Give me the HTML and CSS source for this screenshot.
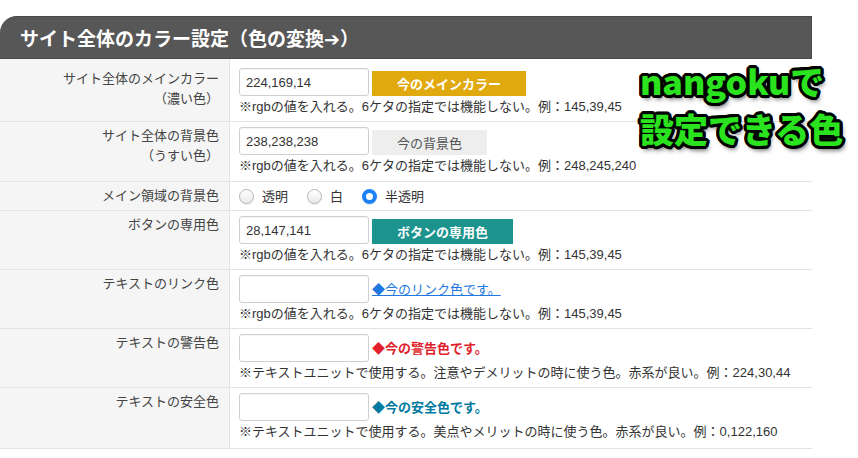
FILE: index.html
```html
<!DOCTYPE html>
<html lang="ja">
<head>
<meta charset="utf-8">
<title>サイト全体のカラー設定</title>
<link rel="stylesheet" href="styles.css">
</head>
<body>
<div class="panel">
  <h2 class="panel-title">サイト全体のカラー設定（色の変換➔）</h2>
  <div class="settings">
    <div class="row first">
      <div class="label">サイト全体のメインカラー<br>（濃い色）</div>
      <div class="field">
        <div class="line"><input class="rgb" type="text" value="224,169,14"><span class="swatch swatch-main">今のメインカラー</span></div>
        <p class="note">※rgbの値を入れる。6ケタの指定では機能しない。例：145,39,45</p>
      </div>
    </div>
    <div class="row">
      <div class="label">サイト全体の背景色<br>（うすい色）</div>
      <div class="field">
        <div class="line"><input class="rgb" type="text" value="238,238,238"><span class="swatch swatch-bg">今の背景色</span></div>
        <p class="note">※rgbの値を入れる。6ケタの指定では機能しない。例：248,245,240</p>
      </div>
    </div>
    <div class="row compact">
      <div class="label">メイン領域の背景色</div>
      <div class="field radios">
        <label class="radio"><input type="radio" name="area">透明</label>
        <label class="radio"><input type="radio" name="area">白</label>
        <label class="radio"><input type="radio" name="area" checked>半透明</label>
      </div>
    </div>
    <div class="row">
      <div class="label">ボタンの専用色</div>
      <div class="field">
        <div class="line"><input class="rgb" type="text" value="28,147,141"><span class="swatch swatch-btn">ボタンの専用色</span></div>
        <p class="note">※rgbの値を入れる。6ケタの指定では機能しない。例：145,39,45</p>
      </div>
    </div>
    <div class="row">
      <div class="label">テキストのリンク色</div>
      <div class="field">
        <div class="line"><input class="rgb" type="text" value=""><a class="sample sample-link" href="#">◆今のリンク色です。</a></div>
        <p class="note">※rgbの値を入れる。6ケタの指定では機能しない。例：145,39,45</p>
      </div>
    </div>
    <div class="row">
      <div class="label">テキストの警告色</div>
      <div class="field">
        <div class="line"><input class="rgb" type="text" value=""><span class="sample sample-warn">◆今の警告色です。</span></div>
        <p class="note">※テキストユニットで使用する。注意やデメリットの時に使う色。赤系が良い。例：224,30,44</p>
      </div>
    </div>
    <div class="row last">
      <div class="label">テキストの安全色</div>
      <div class="field">
        <div class="line"><input class="rgb" type="text" value=""><span class="sample sample-safe">◆今の安全色です。</span></div>
        <p class="note">※テキストユニットで使用する。美点やメリットの時に使う色。赤系が良い。例：0,122,160</p>
      </div>
    </div>
  </div>
</div>
<div class="callout">nangokuで<br>設定できる色</div>
</body>
</html>
```

FILE: styles.css
```css
* { box-sizing: border-box; }

html, body {
  margin: 0;
  padding: 0;
  background: #fff;
}

body {
  font-family: "Liberation Sans", "Noto Sans CJK JP", sans-serif;
  font-size: 13px;
  color: #333;
  position: relative;
  width: 858px;
  height: 458px;
  overflow: hidden;
}

.panel {
  width: 812px;
  padding-top: 16px;
}

.panel-title {
  margin: 0;
  height: 43px;
  line-height: 42px;
  padding-left: 20px;
  background: #575757;
  border: 1px solid #4a4a4a;
  border-left: 0;
  border-top-left-radius: 17px;
  color: #fff;
  font-size: 19px;
  font-weight: bold;
  font-family: "Noto Sans CJK JP", "DejaVu Sans", sans-serif;
}

.settings {
  border-bottom: 1px solid #e2e2e2;
}

.row {
  display: grid;
  grid-template-columns: 230px 1fr;
  border-top: 1px solid #e2e2e2;
}

.row.first { border-top: 0; }

.label {
  background: #f5f5f5;
  border-right: 1px solid #e4e4e4;
  text-align: right;
  padding: 4px 10px 4px 0;
  line-height: 20px;
  color: #444;
}

.first .label { padding-top: 10px; }

.field {
  padding: 5px 0 4px 9px;
}

.first .field { padding-top: 9px; }
.row:nth-child(2) .field { padding-bottom: 5px; }
.last .field { padding-bottom: 6px; }

.line {
  display: flex;
  align-items: flex-end;
  height: 28px;
}

.rgb {
  width: 130px;
  height: 28px;
  border: 1px solid #cfcfcf;
  border-radius: 3px;
  padding: 0 6px;
  font-family: "Liberation Sans", "Noto Sans CJK JP", sans-serif;
  font-size: 13px;
  color: #333;
  background: #fff;
  box-shadow: inset 0 1px 1px rgba(0,0,0,0.04);
}

.swatch {
  margin-left: 3px;
  height: 25px;
  line-height: 25px;
  padding: 0 25px;
  font-family: "Noto Sans CJK JP", sans-serif;
  font-size: 13px;
}

.swatch-main {
  background: rgb(224,169,14);
  color: #fff;
  font-weight: bold;
}

.swatch-bg {
  background: rgb(238,238,238);
  color: #555;
}

.swatch-btn {
  background: rgb(28,147,141);
  color: #fff;
  font-weight: bold;
}

.sample {
  margin-left: 3px;
  align-self: center;
  font-family: "Noto Sans CJK JP", sans-serif;
  font-size: 13px;
  line-height: 20px;
}

.sample-link {
  color: #1f78e0;
  text-decoration: underline;
}

.sample-warn {
  color: rgb(224,30,44);
  font-weight: bold;
}

.sample-safe {
  color: rgb(0,122,160);
  font-weight: bold;
}

.note {
  margin: 0;
  line-height: 21px;
  color: #333;
}

.compact .field {
  padding: 4px 0 4px 9px;
  display: flex;
  align-items: center;
  height: 28px;
}

.compact .label { padding-top: 4px; }

.radio {
  display: inline-flex;
  align-items: center;
  margin-right: 19px;
  line-height: 20px;
  font-family: "Noto Sans CJK JP", sans-serif;
}

.radio input {
  -webkit-appearance: none;
  appearance: none;
  width: 15px;
  height: 15px;
  margin: 0 8px 0 0;
  border-radius: 50%;
  border: 1px solid #b5b5b5;
  background: linear-gradient(#ffffff, #e9e9e9);
  box-shadow: 0 1px 1px rgba(0,0,0,0.08);
}

.radio input:checked {
  border: 4.5px solid #1b81f7;
  background: #fff;
}

.callout {
  position: absolute;
  left: 640px;
  top: 57px;
  font-family: "Noto Sans CJK JP", sans-serif;
  font-weight: 900;
  font-size: 34px;
  line-height: 48px;
  color: #2be21f;
  text-shadow:
    3px 0 0 #000, -3px 0 0 #000, 0 3px 0 #000, 0 -3px 0 #000,
    2px 2px 0 #000, -2px 2px 0 #000, 2px -2px 0 #000, -2px -2px 0 #000,
    3px 1px 0 #000, -3px 1px 0 #000, 3px -1px 0 #000, -3px -1px 0 #000,
    1px 3px 0 #000, -1px 3px 0 #000, 1px -3px 0 #000, -1px -3px 0 #000,
    2px 4px 5px rgba(0,0,0,0.7);
}
```
